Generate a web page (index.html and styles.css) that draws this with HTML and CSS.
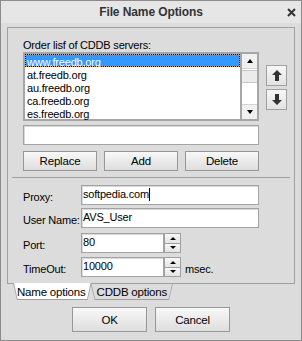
FILE: index.html
```html
<!DOCTYPE html>
<html lang="en">
<head>
  <meta charset="UTF-8">
  <title>File Name Options</title>
  <link rel="stylesheet" href="styles.css">
</head>
<body>
  <div class="window">
    <div class="titlebar">
      <span></span>
      <span class="title">File Name Options</span>
      <span class="close">
        <svg width="9" height="9" viewBox="0 0 9 9"><path d="M1 1L8 8M8 1L1 8" stroke="#333" stroke-width="2"/></svg>
      </span>
    </div>

    <div class="body">
      <div class="panel">
        <div class="caption">Order lisf of CDDB servers:</div>
        <div class="list-row">
          <div class="listbox">
            <ul class="items">
              <li class="selected">www.freedb.org</li>
              <li>at.freedb.org</li>
              <li>au.freedb.org</li>
              <li>ca.freedb.org</li>
              <li>es.freedb.org</li>
            </ul>
            <div class="scrollbar">
              <div class="sb-btn sb-up"><i class="tri-up"></i></div>
              <div class="sb-thumb"></div>
              <div class="sb-track"></div>
              <div class="sb-btn sb-down"><i class="tri-down"></i></div>
            </div>
          </div>
          <div class="move-btns">
            <button class="move"><svg width="10" height="11" viewBox="0 0 10 11"><polygon points="5,0 10,5 7,5 7,11 3,11 3,5 0,5" fill="#333"/></svg></button>
            <button class="move"><svg width="10" height="11" viewBox="0 0 10 11"><polygon points="5,11 10,6 7,6 7,0 3,0 3,6 0,6" fill="#333"/></svg></button>
          </div>
        </div>
        <div class="field server-field"></div>
        <div class="edit-btns">
          <button class="btn">Replace</button>
          <button class="btn">Add</button>
          <button class="btn">Delete</button>
        </div>
        <hr class="sep">

        <div class="row row-proxy">
          <label>Proxy:</label>
          <div class="field wide">softpedia.com<span class="caret"></span></div>
        </div>
        <div class="row row-user">
          <label>User Name:</label>
          <div class="field wide">AVS_User</div>
        </div>
        <div class="row row-port">
          <label>Port:</label>
          <div class="field short">80</div>
          <div class="spin">
            <div class="spin-btn"><i class="tri-up small"></i></div>
            <div class="spin-btn"><i class="tri-down small"></i></div>
          </div>
        </div>
        <div class="row row-timeout">
          <label>TimeOut:</label>
          <div class="field short">10000</div>
          <div class="spin">
            <div class="spin-btn"><i class="tri-up small"></i></div>
            <div class="spin-btn"><i class="tri-down small"></i></div>
          </div>
          <span class="unit">msec.</span>
        </div>
      </div>

      <div class="tabs">
        <div class="tab active"><span>Name options</span></div>
        <div class="tab"><span>CDDB options</span></div>
      </div>
    </div>

    <div class="actions">
      <button class="btn big">OK</button>
      <button class="btn big">Cancel</button>
    </div>
  </div>
</body>
</html>
```

FILE: styles.css
```css
/* Dialog window */
body {
  margin: 0;
  background: #fff;
  font-family: "Liberation Sans", Arial, sans-serif;
  font-size: 11px;
  letter-spacing: -0.2px;
  color: #000;
}

.window {
  width: 302px;
  height: 341px;
  box-sizing: border-box;
  border: 1px solid #8c8c8c;
  background: #dcdcdc;
}

.titlebar {
  height: 22px;
  display: grid;
  grid-template-columns: 1fr auto 1fr;
  align-items: center;
  background: #e6e6e6;
}

.title {
  font-weight: bold;
  font-size: 12px;
  letter-spacing: -0.1px;
  color: #333;
}

.close {
  justify-self: end;
  margin-right: 5px;
  display: flex;
}

.body {
  padding: 4px 0 0 6px;
}

/* Tab page */
.panel {
  width: 288px;
  height: 257px;
  box-sizing: border-box;
  border: 1px solid #a0a0a0;
  padding: 9px 0 0 15px;
}

.caption {
  line-height: 16px;
}

.list-row {
  display: flex;
  margin-top: -1px;
}

.listbox {
  width: 236px;
  height: 69px;
  box-sizing: border-box;
  border: 2px solid #a6a6a6;
  background: #fff;
  display: flex;
}

.items {
  list-style: none;
  margin: 0;
  padding: 0;
  flex: 1;
}

.items li {
  height: 13px;
  line-height: 16px;
  padding-left: 2px;
  white-space: nowrap;
}

.items li.selected {
  box-sizing: border-box;
  padding-left: 1px;
  line-height: 14px;
  color: #fff;
  border: 1px dotted #000;
  background: linear-gradient(#3399ff, #3399ff) padding-box, #f0a030;
}

.scrollbar {
  width: 17px;
  box-sizing: border-box;
  border-left: 2px solid #a6a6a6;
  display: flex;
  flex-direction: column;
  background: #fff;
}

.sb-btn {
  height: 14px;
  display: flex;
  align-items: center;
  justify-content: center;
  background: #f0f0f0;
}

.sb-up {
  border-bottom: 1px solid #d4d4d4;
}

.sb-down {
  border-top: 1px solid #d4d4d4;
}

.sb-thumb {
  height: 11px;
  margin-top: 1px;
  background: #ebebeb;
  border-top: 1px solid #c8c8c8;
  border-bottom: 1px solid #c8c8c8;
}

.sb-track {
  flex: 1;
}

.tri-up, .tri-down {
  width: 0;
  height: 0;
  border-left: 3.5px solid transparent;
  border-right: 3.5px solid transparent;
}

.tri-up {
  border-bottom: 4px solid #000;
}

.tri-down {
  border-top: 4px solid #000;
}

.tri-up.small {
  border-left-width: 3px;
  border-right-width: 3px;
  border-bottom-width: 3px;
}

.tri-down.small {
  border-left-width: 3px;
  border-right-width: 3px;
  border-top-width: 3px;
}

.move-btns {
  display: flex;
  flex-direction: column;
  gap: 3px;
  margin: 13px 0 0 7px;
}

.move {
  width: 21px;
  height: 21px;
  padding: 0;
  border: 1px solid #a0a0a0;
  background: linear-gradient(#f7f7f7, #e2e2e2);
  display: flex;
  align-items: center;
  justify-content: center;
}

/* Inputs and buttons */
.field {
  box-sizing: border-box;
  height: 20px;
  border: 1px solid #a3a3a3;
  box-shadow: inset 1px 1px 0 #dadada;
  background: #fff;
  padding: 0 1px;
  line-height: 16px;
  white-space: nowrap;
}

.server-field {
  width: 236px;
  margin-top: 4px;
}

.caret {
  display: inline-block;
  width: 1px;
  height: 13px;
  background: #000;
  vertical-align: -3px;
}

.btn {
  font: inherit;
  letter-spacing: inherit;
  color: #000;
  padding: 0;
  border: 1px solid #979797;
  background: linear-gradient(#f8f8f8, #dedede);
}

.edit-btns {
  display: flex;
  gap: 7px;
  margin-top: 6px;
}

.edit-btns .btn {
  width: 74px;
  height: 20px;
  font-size: 11.5px;
}

.sep {
  margin: 6px 0 0 -11px;
  width: 278px;
  height: 0;
  border: 0;
  border-top: 1px solid #a0a0a0;
}

.row {
  display: flex;
  align-items: flex-end;
}

.row label {
  width: 58px;
  line-height: 15px;
  white-space: nowrap;
}

.row-proxy { margin-top: 7px; }
.row-user { margin-top: 3px; }
.row-port { margin-top: 5px; }
.row-timeout { margin-top: 4px; }

.wide {
  width: 178px;
}

.short {
  width: 83px;
}

.spin {
  width: 17px;
  height: 20px;
  display: flex;
  flex-direction: column;
}

.spin-btn {
  flex: 1;
  box-sizing: border-box;
  border: 1px solid #a0a0a0;
  background: linear-gradient(#f8f8f8, #e4e4e4);
  display: flex;
  align-items: center;
  justify-content: center;
}

.spin-btn + .spin-btn {
  margin-top: -1px;
}

.unit {
  margin-left: 4px;
  line-height: 15px;
}

/* Bottom tabs */
.tabs {
  display: flex;
  margin: -1px 0 0 6px;
}

.tab {
  height: 17px;
  background: #a0a0a0;
  clip-path: polygon(0 0, 100% 0, calc(100% - 4px) 100%, 4px 100%);
}

.tab span {
  display: block;
  height: 100%;
  padding: 0 6px 0 4px;
  line-height: 18px;
  font-size: 11.5px;
  background: #dcdcdc;
  clip-path: polygon(1px 1px, calc(100% - 1px) 1px, calc(100% - 4.5px) calc(100% - 1px), 4.5px calc(100% - 1px));
}

.tab.active span {
  background: #fff;
  clip-path: polygon(1px 0, calc(100% - 1px) 0, calc(100% - 4.5px) calc(100% - 1px), 4.5px calc(100% - 1px));
}

.tab + .tab {
  margin-left: -1px;
}

.tab + .tab span {
  padding-left: 6px;
}

.actions {
  display: flex;
  justify-content: center;
  gap: 8px;
  margin-top: 7px;
}

.btn.big {
  width: 75px;
  height: 25px;
  font-size: 11.5px;
}
```
